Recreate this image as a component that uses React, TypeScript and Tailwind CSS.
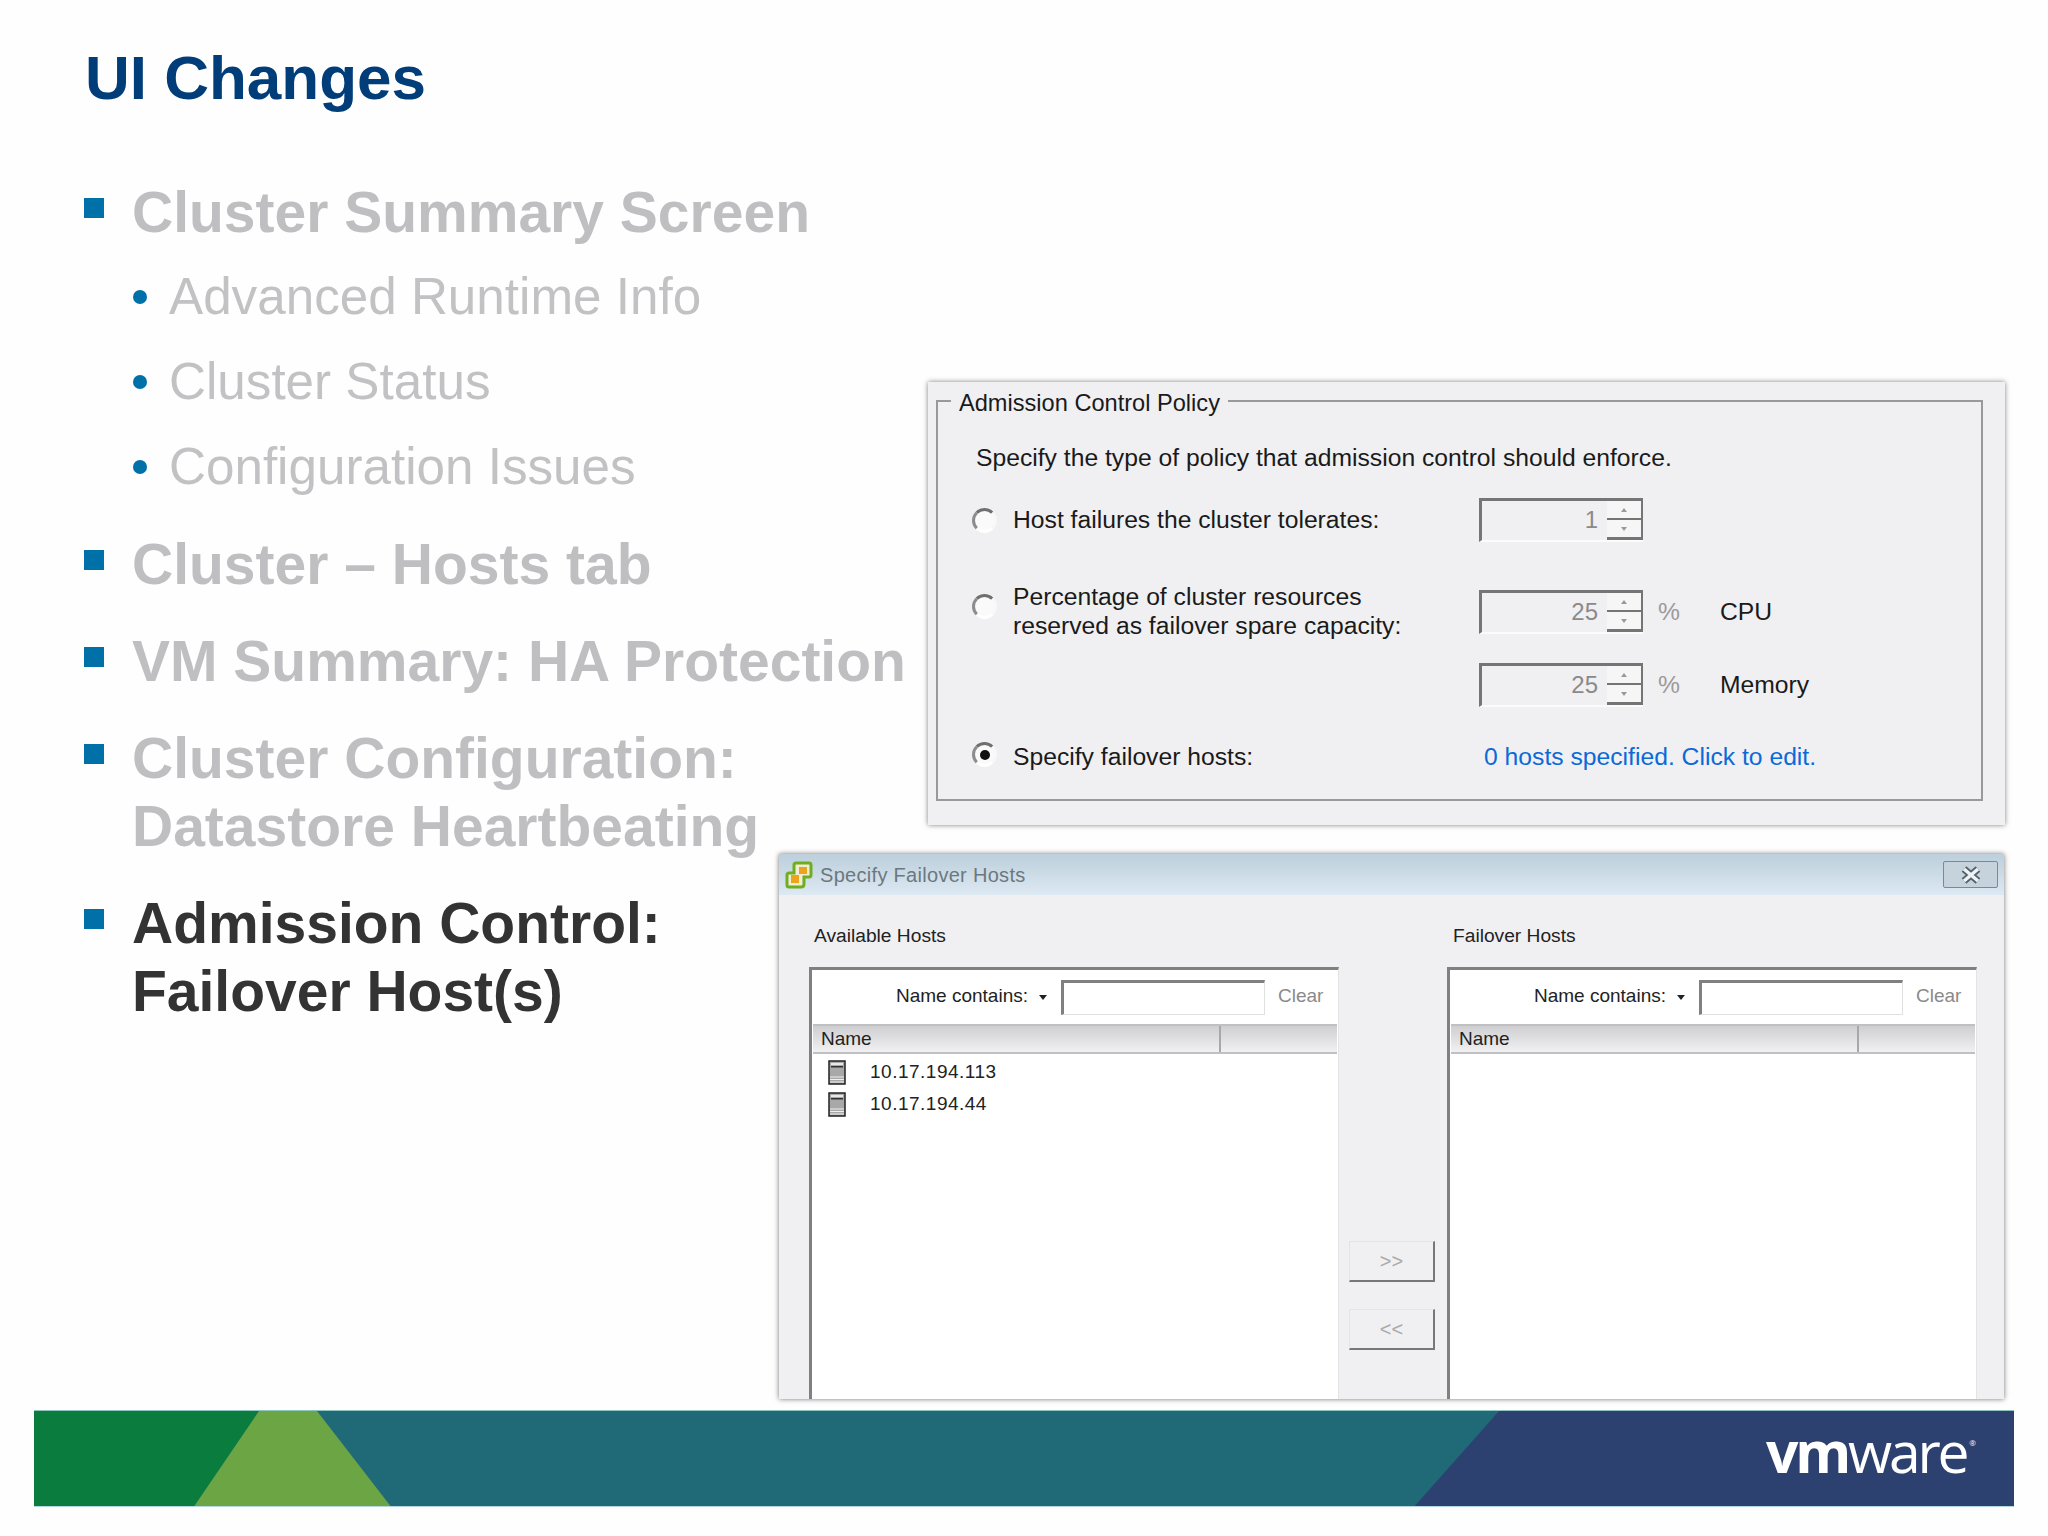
import React from 'react';

const sans = 'font-["Liberation_Sans",Arial,sans-serif]';

const Top = ({ children, active }: { children: React.ReactNode; active?: boolean }) => (
  <li className="flex mt-[29px] first:mt-0">
    <span className="w-[20px] h-[20px] bg-[#0070a8] mt-[20px] mr-[28px] shrink-0" />
    <div className={`text-[57px] leading-[68px] font-bold ${active ? 'text-[#333333]' : 'text-[#bfbfc2]'}`}>{children}</div>
  </li>
);

const Sub = ({ label }: { label: string }) => (
  <li className="flex items-center h-[56px] mt-[29px] first:mt-0 ml-[49px]">
    <span className="w-[14px] h-[14px] rounded-full bg-[#0070a8] mr-[22px] shrink-0" />
    <span className="text-[51.2px] leading-[56px] text-[#c2c2c4]">{label}</span>
  </li>
);

const Radio = ({ checked, className = '' }: { checked?: boolean; className?: string }) => (
  <span className={`w-[25px] h-[25px] -ml-[2px] rounded-full bg-[#fafafa] border-[3px] border-t-[#6f6f6f] border-l-[#8c8c8c] border-r-[#f8f8f8] border-b-[#ffffff] flex items-center justify-center shrink-0 ${className}`}>
    {checked && <span className="w-[10px] h-[10px] rounded-full bg-[#111111]" />}
  </span>
);

const Spinner = ({ value }: { value: string }) => (
  <div className="w-[164px] h-[44px] flex bg-[#f0f0f2] border-t-[3px] border-l-[3px] border-[#757575] border-b-2 border-b-[#fbfbfb]">
    <div className="flex-1 text-right pr-[9px] text-[24px] leading-[38px] text-[#8a8a8a]">{value}</div>
    <div className="w-[36px] flex flex-col border-r-2 border-[#757575]">
      <div className="flex-1 flex items-center justify-center bg-[#f6f6f7] border-b-2 border-[#757575]">
        <span className="w-0 h-0 border-x-[3px] border-x-transparent border-b-[4px] border-b-[#9a9a9a]" />
      </div>
      <div className="flex-1 flex items-center justify-center bg-[#f6f6f7] border-b-[3px] border-[#757575]">
        <span className="w-0 h-0 border-x-[3px] border-x-transparent border-t-[4px] border-t-[#9a9a9a]" />
      </div>
    </div>
  </div>
);

const ServerIcon = () => (
  <svg width="18" height="25" viewBox="0 0 18 25" className="shrink-0">
    <rect x="1" y="1" width="16" height="23" fill="#a8a8a8" stroke="#222222" strokeWidth="1.5" />
    <rect x="3" y="3" width="12" height="2" fill="#e8e8e8" />
    <rect x="3" y="6" width="12" height="1.5" fill="#333333" />
    <path d="M2 17h14M2 19.5h14M2 22h14" stroke="#eeeeee" strokeWidth="1" />
  </svg>
);

const HostPanel = ({ hosts }: { hosts: string[] }) => (
  <div className="h-[432px] bg-white border-t-[3px] border-l-[3px] border-[#808080] border-r border-r-[#e4e4e4] flex flex-col">
    <div className="h-[54px] flex items-center justify-end pr-[16px] text-[#222222] text-[19px]">
      <span className="-mt-[2px]">Name contains:</span>
      <span className="w-0 h-0 ml-[11px] mr-[14px] border-x-[4px] border-x-transparent border-t-[5px] border-t-[#222222]" />
      <div className="w-[204px] h-[35px] mr-[13px] bg-white border-t-[3px] border-l-[3px] border-[#808080] border-r border-b border-r-[#e0e0e0] border-b-[#e0e0e0]" />
      <span className="text-[#8a8a8a] w-[44px] -mt-[2px]">Clear</span>
    </div>
    <div className="h-[30px] flex mx-[1px] bg-gradient-to-b from-[#cfcfd1] to-[#f1f1f3] border-t-2 border-b-2 border-[#c0c0c2] text-[19px] leading-[25px] text-[#222222]">
      <div className="w-[408px] pl-[8px] border-r-2 border-[#a8a8a8]">Name</div>
      <div className="flex-1" />
    </div>
    <div className="pt-[6px] pl-[16px] flex flex-col gap-[7px]">
      {hosts.map((host) => (
        <div key={host} className="flex items-center gap-[24px] h-[25px] text-[19px] tracking-[0.5px] text-[#222222]">
          <ServerIcon />
          {host}
        </div>
      ))}
    </div>
  </div>
);

const MoveButton = ({ label }: { label: string }) => (
  <div className="w-[86px] h-[41px] flex items-center justify-center bg-[#f0f0f2] border border-[#e4e4e6] border-r-2 border-b-2 border-r-[#777777] border-b-[#777777] text-[20px] text-[#aaaaaa]">
    {label}
  </div>
);

const AdmissionPanel = () => (
  <div className="absolute left-[928px] top-[382px] w-[1077px] h-[443px] bg-[#f0f0f2] shadow-[0_0_5px_rgba(0,0,0,0.5)] pl-[8px] pr-[22px] pt-[18px] text-[24.7px] text-[#1a1a1a]">
    <div className="relative h-[401px] border-2 border-[#999999] pl-[38px] pt-[42px]">
      <span className="absolute left-[13px] top-[-13px] px-[8px] bg-[#f0f0f2] leading-[28px] text-[23.6px]">Admission Control Policy</span>
      <div className="leading-[28px]">Specify the type of policy that admission control should enforce.</div>
      <div className="grid grid-cols-[39px_466px_164px_1fr] items-center mt-[26px] h-[44px] -ml-[2px]">
        <Radio />
        <span>Host failures the cluster tolerates:</span>
        <Spinner value="1" />
      </div>
      <div className="grid grid-cols-[39px_466px_164px_1fr] items-center mt-[42px] h-[44px] -ml-[2px]">
        <Radio className="-mt-[12px]" />
        <span className="leading-[29px] -mt-[2px] whitespace-nowrap">Percentage of cluster resources<br />reserved as failover spare capacity:</span>
        <Spinner value="25" />
        <div className="flex pl-[15px]"><span className="w-[62px] text-[#9b9b9b]">%</span>CPU</div>
      </div>
      <div className="grid grid-cols-[39px_466px_164px_1fr] items-center mt-[35px] h-[44px] -ml-[2px]">
        <span />
        <span />
        <Spinner value="25" />
        <div className="flex pl-[15px]"><span className="w-[62px] text-[#9b9b9b]">%</span>Memory</div>
      </div>
      <div className="grid grid-cols-[39px_466px_1fr] items-center mt-[31px] h-[28px] -ml-[2px]">
        <Radio checked className="-mt-[4px]" />
        <span>Specify failover hosts:</span>
        <span className="pl-[5px] text-[#0a6ad8]">0 hosts specified. Click to edit.</span>
      </div>
    </div>
  </div>
);

const FailoverDialog = () => (
  <div className="absolute left-[779px] top-[854px] w-[1225px] h-[545px] bg-[#f0f0f2] shadow-[0_0_5px_rgba(0,0,0,0.55)]">
    <div className="h-[41px] flex items-center pl-[5px] pr-[6px] bg-gradient-to-b from-[#bccfdb] to-[#dde9f3]">
      <svg width="30" height="30" viewBox="0 0 30 30" className="shrink-0">
        <path d="M12 3H25Q27 3 27 5V15Q27 17 25 17H20V24Q20 27 17 27H5Q3 27 3 25V15Q3 13 5 13H10V5Q10 3 12 3Z" fill="#f1ecd2" stroke="#6fae1f" strokeWidth="3" />
        <rect x="15" y="7" width="8" height="7" fill="#eba41c" />
        <rect x="7" y="15" width="8" height="8" fill="#eba41c" />
      </svg>
      <span className="ml-[6px] flex-1 text-[20px] tracking-[0.3px] text-[#6b7880]">Specify Failover Hosts</span>
      <div className="w-[55px] h-[27px] flex items-center justify-center bg-[#c6d3dd] border border-[#77899a] rounded-[2px]">
        <svg width="22" height="18" viewBox="0 0 22 18">
          <path d="M4 3l14 12M18 3L4 15" stroke="#56626b" strokeWidth="7" />
          <path d="M4 3l14 12M18 3L4 15" stroke="#eef2f5" strokeWidth="3.5" />
        </svg>
      </div>
    </div>
    <div className="flex pl-[30px] pt-[29px] text-[19.2px] text-[#222222]">
      <div className="w-[530px]">
        <div className="h-[43px] pl-[5px] leading-[24px]">Available Hosts</div>
        <HostPanel hosts={['10.17.194.113', '10.17.194.44']} />
      </div>
      <div className="w-[108px] pl-[10px] pt-[317px] flex flex-col gap-[27px]">
        <MoveButton label=">>" />
        <MoveButton label="<<" />
      </div>
      <div className="w-[530px]">
        <div className="h-[43px] pl-[6px] leading-[24px]">Failover Hosts</div>
        <HostPanel hosts={[]} />
      </div>
    </div>
  </div>
);

const Footer = () => (
  <div className="mx-[34px] mb-[29px] h-[97px] relative bg-[#206a78] border-t border-[#8fc7c0] border-b border-b-[#b4d8e0] overflow-hidden">
    <svg width="1980" height="97" viewBox="0 0 1980 97" className="block">
      <polygon points="0,0 225,0 159,97 0,97" fill="#0a7c3e" />
      <polygon points="225,0 283,0 358,97 159,97" fill="#6ca644" />
      <polygon points="1465,0 1980,0 1980,97 1379,97" fill="#2d4170" />
    </svg>
    <div className="absolute right-[38px] top-[4px] flex items-start font-['Open_Sans',sans-serif] text-white text-[57px] leading-[72px] tracking-[-3.2px]">
      <span className="font-bold">vm</span>
      <span>ware</span>
      <span className="text-[8px] leading-[8px] tracking-normal mt-[24px] ml-[3px]">®</span>
    </div>
  </div>
);

export default function App() {
  return (
    <div className={`relative w-[2048px] h-[1536px] bg-[#fefefe] flex flex-col ${sans}`}>
      <h1 className="pl-[85px] pt-[41px] text-[62px] leading-[74px] font-bold text-[#003d79]">UI Changes</h1>
      <ul className="pl-[84px] pt-[63px] flex-1">
        <Top>Cluster Summary Screen</Top>
        <ul className="mt-[23px] mb-[35px]">
          <Sub label="Advanced Runtime Info" />
          <Sub label="Cluster Status" />
          <Sub label="Configuration Issues" />
        </ul>
        <Top>Cluster – Hosts tab</Top>
        <Top>VM Summary: HA Protection</Top>
        <Top>Cluster Configuration:<br />Datastore Heartbeating</Top>
        <Top active>Admission Control:<br />Failover Host(s)</Top>
      </ul>
      <AdmissionPanel />
      <FailoverDialog />
      <Footer />
    </div>
  );
}
